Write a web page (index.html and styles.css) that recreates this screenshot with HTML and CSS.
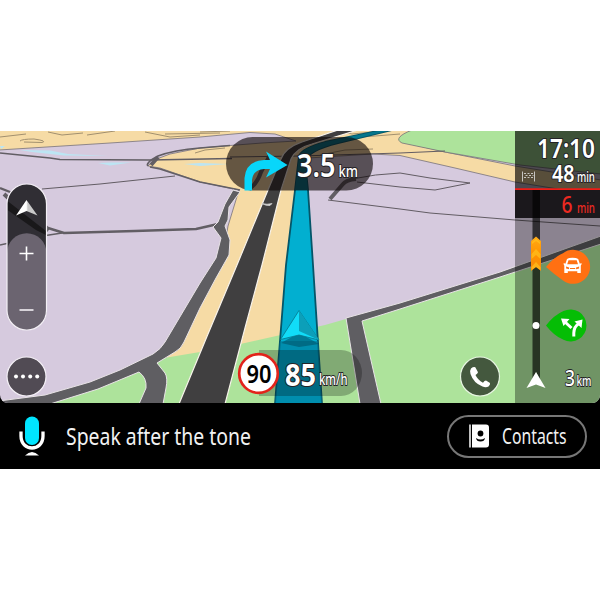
FILE: index.html
```
<!DOCTYPE html>
<html lang="en">
<head>
<meta charset="utf-8">
<title>Navigation</title>
<link rel="stylesheet" href="styles.css">
</head>
<body>
<main class="device">
  <section class="map">
    <svg class="scene" viewBox="0 131 600 272" width="600" height="272">
      <defs>
        <linearGradient id="orange" x1="0" y1="0" x2="0" y2="1"><stop offset="0" stop-color="#ffab18"/><stop offset=".5" stop-color="#ff9300"/><stop offset="1" stop-color="#f98a0a"/></linearGradient>
        <linearGradient id="silver"><stop offset=".48" stop-color="#fff"/><stop offset=".55" stop-color="#c9c9c9"/></linearGradient>
      </defs>

      <!-- land -->
      <rect class="urban" y="131" width="600" height="272"/>
      <path class="sand edge" d="M-1 130H414L400 137 402 142 445 152 515 166 601 180V196L515 182 455 168 400 155.500 373 154 340 156 308 158 300 190 316 345 165 360 222 262 228 226 239 190 200 182 160 168 148 166 154 160 170 154 200 148 230 145.500 262 143 296 141 275 134 250 132.500 200 137 110 143-1 150z"/>
      <path class="park edge" d="M412 130H601V174L520 165 445 152 402 143Q392 138 412 130z"/>
      <path class="park" d="M50 404 90 391 138 372 158 359 200 352 245 343 325 325 346 319 400 303 515 269 601 242V404z"/>
      <path class="water" d="M20 150 50 150.500 68 154 108 156 64 155.500 32 152zM98 163 110 162.500 131 162.500 110 165.500zM0 146 5 146 1 149zM184 164 200 163 228 164 200 166z"/>

      <!-- minor roads -->
      <g class="lane faint">
        <path d="M20 141Q22 139 34 139Q48 141 42 142.500L24 142M48 132 62 135 83 133M87 135 115 131M165 134 220 133M0 137 26 134M145 132 170 137 200 135M195 153 205 150 225 148M200 132 230 131M340 131 352 134 385 131M345 138 375 136 400 134M320 155 345 150 373 149"/>
      </g>
      <g class="lane">
        <path d="M42 189 100 184 175 176M230 157 300 156 400 153 445 151"/>
        <path d="M352 179Q375 174 400 173L430 178 470 183 435 190 400 187 357 182"/>
        <path d="M328 200 400 209 430 213 515 220 600 226"/>
      </g>
      <path class="street" d="M0 153 50 158 60 159.500 150 160 232 158.500"/>
      <path class="street" d="M148 166Q145 163 158 156Q174 150 200 148L230 145.500"/>
      <path class="street wide" d="M0 188 10 192 48 228 64 233 135 231 196 229 218 224"/>
      <path class="street" d="M0 245 36 237 62 233M150 167 160 169 200 182 240 190"/>
      <path class="street mid" d="M4 194 22 211 48 231M249 189Q257 184 261 172L270 155M330 199 343 184Q346 180 356 179M151 165 158 157"/>

      <!-- left avenue -->
      <path class="road" d="M233 190 240 192 229 207 228 220 225 226 230 240 229 255 216 278 200 308 184 342Q181 349 175 352L157 363 165 373Q168 378 166 388L163 404H139L146 388Q147 378 139 372L98 389 50 404H-1V401L45 395 90 382 120 370 153 354Q161 349 165 342L200 283 216 258 221 238 213 227 218 222 225 204z"/>
      <!-- right avenue -->
      <path class="road" d="M346 318 400 303 500 272 601 236V244L500 277 400 309 362 321 381 404H360z"/>

      <!-- dual carriageway -->
      <path class="highway" d="M179 404 208 334 237 265 268 190 281 159Q285 148 302 142L338 130H358L312 144Q296 148 291 159L281 190 262 265 245 328 225 404z"/>
      <path class="overpass" d="M262 203.500Q267 205 272 203.500L270 205.500Q266 206 262 203.500z"/>
      <path class="route" d="M275 404 286 265 295 190 299 156Q302 148 325 142L382 130H392L338 143Q309 150 305 161L308 190 313 265 322 404z"/>
      <path class="route-far" d="M295 190 299 156Q302 148 325 142L382 130H392L338 143Q309 150 305 161L308 190z"/>

      <!-- vehicle -->
      <path class="route-behind" d="M280 341 318 341 322 404H275z"/>
      <path class="shadow" d="M281 343 299 333 319 344 299 347z"/>
      <path class="cursor" d="M299 310.500 280.500 339.500 299 335 319 340z"/>
      <path class="cursor-dark" d="M299 310.500 319 340 299 331z"/>

      <!-- speed -->
      <path class="speed-back" d="M259 350H341A21 23 0 0 1 341 396H259z"/>
      <circle class="limit" cx="258.500" cy="373.500" r="19.300"/>
      <text class="limit-text" x="246.500" y="382.500" textLength="25" lengthAdjust="spacingAndGlyphs">90</text>
      <text class="hud speed" x="285" y="385.500" textLength="31" lengthAdjust="spacingAndGlyphs">85</text>
      <text class="hud speed-unit" x="319" y="385" textLength="28.500" lengthAdjust="spacingAndGlyphs">km/h</text>

      <!-- next manoeuvre -->
      <rect class="hint" x="226" y="137" width="147" height="53.500" rx="26.750"/>
      <path class="turn" d="M244.500 190.500V178Q246 161 264 160H270L266 151.500 287.500 165 266 177.500 270 169H264Q253 170 252 180V190.500z"/>
      <text class="hud distance" x="297" y="177" textLength="38.500" lengthAdjust="spacingAndGlyphs">3.5</text>
      <text class="hud distance-unit" x="338.500" y="176.500" textLength="19.500" lengthAdjust="spacingAndGlyphs">km</text>

      <!-- view controls -->
      <rect class="control-top" x="7" y="184" width="39.500" height="146" rx="19.750"/>
      <path class="control-street" d="M7.500 201 46 231V235L36 230 7.500 210z"/>
      <path class="control-zoom" d="M7 253A19.750 19.750 0 0 1 46.500 253V310A19.750 19.750 0 0 1 7 310z"/>
      <rect class="control-line" x="7" y="184" width="39.500" height="146" rx="19.750"/>
      <path fill="url(#silver)" d="M26.500 200 16 215.500 26.500 211 37.500 215.500z"/>
      <path class="sign" d="M19.500 253.500H33.500M26.500 246.500V260.500"/>
      <path class="sign minus" d="M19.500 310H33.500"/>
      <circle class="menu" cx="26.500" cy="376.500" r="19.500"/>
      <g fill="#fff"><circle cx="16" cy="376.500" r="2"/><circle cx="23" cy="376.500" r="2"/><circle cx="30.200" cy="376.500" r="2"/><circle cx="37.200" cy="376.500" r="2"/></g>
      <circle class="phone" cx="480" cy="376.500" r="19.500"/>
      <path fill="#fff" d="M471 368.500Q473.500 366.500 475.300 367.300L478 372.300Q477.500 374 475.500 375Q477.700 380 483 382.700Q484.500 380.600 486 380.500L490 383Q490.500 384.500 488.500 386.500Q486 388 482.500 386.600Q473.500 383 470.500 374Q469.500 370.500 471 368.500z"/>

      <!-- route bar -->
      <path class="panel" d="M515 131H600V403H515z"/>
      <path class="panel-top" d="M515 131H600V189H515z"/>
      <path class="delay-back" d="M515 190H600V218H515z"/>
      <path fill="#ee1d16" d="M515 188.200H600V190H515z"/>
      <path class="track" d="M532.500 190H540V381L536.300 372 532.500 381z"/>
      <path fill="url(#orange)" d="M531 241 536 236.500 541 241V271L536 267 531 271z"/>
      <path fill="#ffc21e" d="M531.500 254 536 249 540.500 254V259L536 255 531.500 259zM532 242 536 238.500 540 242V244L536 241 532 244zM531.500 267 536 262 540.500 267V270L536 267 531.500 270z" opacity=".7"/>
      <text class="hud clock" x="537" y="157.500" textLength="58" lengthAdjust="spacingAndGlyphs">17:10</text>
      <text class="hud remaining" x="552" y="181.500" textLength="22.500" lengthAdjust="spacingAndGlyphs">48</text>
      <text class="hud minute" x="577" y="181.500" textLength="18" lengthAdjust="spacingAndGlyphs">min</text>
      <g class="flag"><path d="M522.500 171.500V181.500M534.500 171.500V181.500"/><path d="M524 173.500H533.500M525.500 175.500H533.500M524 177.500H533.500" stroke-dasharray="2 1.500"/></g>
      <text class="hud late" x="561.500" y="212.500" textLength="11" lengthAdjust="spacingAndGlyphs">6</text>
      <text class="hud minute red" x="577" y="212.500" textLength="18" lengthAdjust="spacingAndGlyphs">min</text>

      <path fill="#ff7012" d="M546 267Q554 257 563 253.200A17 17 0 1 1 563 280.500Q555 275 546 267z"/>
      <g transform="translate(563.500 257.500)">
        <path fill="#fff" fill-rule="evenodd" d="M3.500 1.500Q5 .2 9 .2T14.700 1.500L16.300 6.200 18 5.500V7L17.300 8V15.500H13.800V13.800H4.300V15.500H.8V8L.2 7V5.500L1.900 6.200zM5 2.700 3.700 6.700H14.500L13.200 2.700zM2.600 9V11L5.600 11.700V10zM15.600 9V11L12.600 11.700V10zM6.500 11.400H11.700V10.400H6.500z"/>
      </g>
      <path fill="#05bd05" d="M546 325.500Q554 315 563.500 311A16 16 0 1 1 563.500 339.800Q554 336 546 325.500z"/>
      <g class="fork"><path d="M573.800 336.500V333Q574 326.500 579 323.500"/><path d="M571.500 328 565 322"/><path class="tips" d="M561 318.500 569.500 319 563.500 326zM582.500 319.500 581.500 328 574.500 321.500z"/></g>
      <circle cx="536" cy="325.500" r="3.500" fill="#fff"/>
      <path fill="#fff" d="M536 372 526.500 388 536 384.500 545.500 388z"/>
      <text class="hud scale-value" x="565" y="386" textLength="10" lengthAdjust="spacingAndGlyphs">3</text>
      <text class="hud scale-unit" x="576.500" y="386" textLength="15" lengthAdjust="spacingAndGlyphs">km</text>
    </svg>
  </section>

  <footer class="voice">
    <svg class="mic" viewBox="0 0 28 42" width="28" height="42"><rect x="7" y="1.500" width="14" height="28.500" rx="7" fill="#00e5ff"/><path d="M3 16.500V21C3 37 25 37 25 21V16.500" fill="none" stroke="#fff" stroke-width="3.300"/><path d="M7 40.500Q14 33.500 21 40.500z" fill="#fff"/></svg>
    <p class="prompt"><span>Speak after the tone</span></p>
    <button class="contacts">
      <svg viewBox="0 0 20 24" width="20" height="24"><path d="M1 .5V23.500" stroke="#fff" stroke-width="1.500"/><path d="M3 .5H17Q20 .5 20 3.500V20.500Q20 23.500 17 23.500H3z" fill="#fff"/><circle cx="11.500" cy="9.500" r="2.900"/><path d="M7 14Q11.500 17 16 14Q15.500 17.500 11.500 17.500T7 14z"/></svg>
      <span class="contacts-label">Contacts</span>
    </button>
  </footer>
</main>
</body>
</html>
```

FILE: styles.css
```
* { box-sizing: border-box; }
body {
  display: flow-root;
  margin: 0;
  min-height: 600px;
  background: #fff;
  font-family: "Noto Sans", "Open Sans", sans-serif;
}
.device {
  width: 600px;
  height: 338px;
  margin-top: 131px;
  background: #000;
  overflow: hidden;
  display: flex;
  flex-direction: column;
}
.map { height: 272px; border-radius: 0 0 8px 8px; overflow: hidden; flex: none; }
.scene { display: block; }

.urban { fill: #d6cade; }
.sand { fill: #f6dba5; }
.park { fill: #ade39b; }
.water { fill: #bce5f3; }
.edge { stroke: #77727a; stroke-width: .8; }
.lane { fill: none; stroke: #625c63; stroke-width: 1; }
.lane.faint { stroke: #a2906f; }
.street { fill: none; stroke: #625e64; stroke-width: 1.7; stroke-linejoin: round; }
.street.wide { stroke-width: 2.4; }
.street.mid { stroke-width: 4; }
.road { fill: #5f5e62; stroke: #e8e3e6; stroke-width: 1; }
.highway { fill: #403f40; stroke: #f7f2ea; stroke-width: 1.2; }
.overpass { fill: #ddd; stroke: #ccc; stroke-width: .8; }
.route { fill: #02afd0; stroke: #055568; stroke-width: 1.8; }
.route-far { fill: #04768c; }
.route-behind { fill: #007d9b; opacity: .65; }
.shadow { fill: #00485c; opacity: .5; }
.cursor { fill: #11dcf8; stroke: #08758a; stroke-width: .8; }
.cursor-dark { fill: #0c9fb9; }

.speed-back { fill: #000; opacity: .25; }
.limit { fill: #fff; stroke: #e2231a; stroke-width: 2.7; }
.limit-text { font-size: 25px; font-weight: 600; fill: #000; }
.hud {
  fill: #fff;
  stroke: #242226;
  stroke-width: 2.2;
  stroke-linejoin: round;
  paint-order: stroke;
  font-weight: 500;
}
.speed { font-size: 31px; font-weight: 700; }
.speed-unit { font-size: 16px; stroke-width: 2; }
.hint { fill: #0b0505; opacity: .62; }
.turn { fill: #08d6fa; }
.distance { font-size: 32px; font-weight: 600; }
.distance-unit { font-size: 17px; }

.control-top { fill: #302e34; }
.control-zoom { fill: #6b6470; }
.control-street { fill: #19181a; }
.control-line { fill: none; stroke: #f4f0f6; stroke-width: 1.2; }
.sign { stroke: #fff; stroke-width: 1.6; }
.minus { stroke: #d7d3d9; stroke-width: 2; }
.menu { fill: #514b54; stroke: #f4f0f6; stroke-width: 1.2; }
.phone { fill: #44583e; stroke: #e8f6e3; stroke-width: 1.2; }

.panel { fill: #000; opacity: .35; }
.panel-top { fill: #000; opacity: .45; }
.delay-back { fill: #1b181c; }
.track { fill: #000; opacity: .65; }
.clock { font-size: 27px; font-weight: 600; }
.remaining { font-size: 23px; font-weight: 600; }
.minute { font-size: 14px; }
.late { font-size: 24px; }
.late, .red { fill: #ec2921; stroke: none; }
.flag { stroke: #c7c5c1; stroke-width: 1; fill: none; }
.fork { fill: none; stroke: #fff; stroke-width: 3; }
.fork .tips { fill: #fff; stroke: none; }
.scale-value { font-size: 22px; stroke-width: 1.8; }
.scale-unit { font-size: 14px; stroke-width: 1.8; }

.voice {
  height: 66px;
  display: flex;
  align-items: center;
  padding: 0 13px 0 18px;
  color: #f2f2f2;
}
.mic { flex: none; margin-top: -1px; }
.prompt { margin: 0 0 0 20px; width: 200px; flex: none; font-size: 23.5px; line-height: 30px; white-space: nowrap; }
.prompt span { display: inline-block; transform: scaleX(.825); transform-origin: left; }
.contacts {
  width: 140px;
  height: 43px;
  margin-left: auto;
  padding: 0 0 0 20px;
  border: 2px solid #777;
  border-radius: 22px;
  background: #000;
  color: #f2f2f2;
  font: 400 21px "Noto Sans", "Open Sans", sans-serif;
  display: flex;
  align-items: center;
  gap: 13px;
}
.contacts svg { flex: none; }
.contacts-label { transform: scaleX(.75); transform-origin: left; }
```
